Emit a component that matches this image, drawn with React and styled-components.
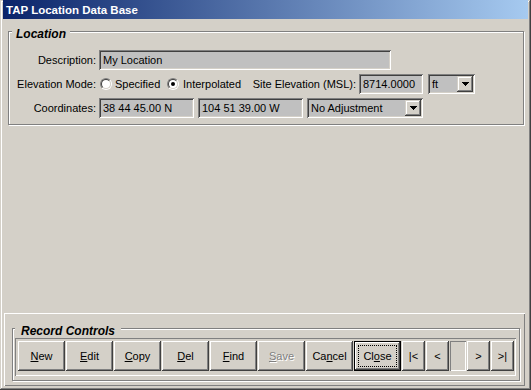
import React from 'react';
import styled, { createGlobalStyle } from 'styled-components';

const Global = createGlobalStyle`
  html, body { margin: 0; padding: 0; background: #D4D0C8; }
  body { font-family: "Liberation Sans", Arial, sans-serif; font-size: 11px; color: #000; }
`;

const Window = styled.div`
  width: 531px;
  height: 390px;
  box-sizing: border-box;
  background: #D4D0C8;
  display: flex;
  flex-direction: column;
  padding: 0 3px 4px 3px;
  box-shadow: inset -1px -1px #404040, inset 1px 1px #D4D0C8, inset -2px -2px #808080, inset 2px 2px #fff;
`;

const TitleBar = styled.div`
  height: 19px;
  flex: none;
  display: flex;
  align-items: center;
  padding-left: 3px;
  background: linear-gradient(to right, #0A246A, #A6CAF0);
  color: #fff;
  font-weight: bold;
  font-size: 11.5px;
`;

const Group = styled.div`
  position: relative;
  box-sizing: border-box;
  border: 1px solid #808080;
  box-shadow: 1px 1px 0 #fff, inset 1px 1px 0 #fff;
`;

const LocationGroup = styled(Group)`
  margin: 12px 4px 0 5px;
  padding: 18px 0 6px 0;
`;

const Legend = styled.span`
  position: absolute;
  top: -5px;
  left: ${p => p.$left}px;
  padding: 0 ${p => p.$pad}px;
  background: #D4D0C8;
  font-weight: bold;
  font-style: italic;
  font-size: 12px;
  line-height: 14px;
`;

const FormGrid = styled.div`
  display: grid;
  grid-template-columns: 87px 1fr;
  column-gap: 3px;
  row-gap: 4px;
  align-items: center;
`;

const Label = styled.div`
  text-align: right;
  white-space: nowrap;
  width: ${p => (p.$w ? `${p.$w}px` : 'auto')};
  flex: none;
`;

const Row = styled.div`
  display: flex;
  align-items: center;
  height: 20px;
  gap: ${p => p.$gap || 0}px;
`;

const Field = styled.div`
  box-sizing: border-box;
  width: ${p => p.$w}px;
  height: 20px;
  flex: none;
  margin-left: ${p => p.$ml || 0}px;
  background: #C0C0C0;
  padding: 0 4px;
  line-height: 20px;
  white-space: nowrap;
  overflow: hidden;
  box-shadow: inset 1px 1px #808080, inset -1px -1px #fff, inset 2px 2px #404040, inset -2px -2px #D4D0C8;
`;

const Combo = styled(Field)`
  display: flex;
  align-items: center;
  padding: 2px 2px 2px 4px;
  line-height: 16px;
`;

const ComboText = styled.span`
  flex: 1;
`;

const ArrowButton = styled.span`
  width: 16px;
  height: 16px;
  flex: none;
  display: flex;
  align-items: center;
  justify-content: center;
  background: #D4D0C8;
  box-shadow: inset -1px -1px #404040, inset 1px 1px #D4D0C8, inset -2px -2px #808080, inset 2px 2px #fff;
`;

const RadioOption = styled.label`
  display: flex;
  align-items: center;
  gap: ${p => p.$gap}px;
  width: ${p => p.$w}px;
  margin-left: ${p => p.$ml || 0}px;
  flex: none;
  white-space: nowrap;
`;

const RadioOuter = styled.span`
  width: 12px;
  height: 12px;
  box-sizing: border-box;
  border-radius: 50%;
  border: 1px solid;
  border-color: #808080 #fff #fff #808080;
  display: inline-flex;
  align-items: center;
  justify-content: center;
  flex: none;
`;

const RadioInner = styled.span`
  width: 10px;
  height: 10px;
  box-sizing: border-box;
  border-radius: 50%;
  border: 1px solid;
  border-color: #404040 #D4D0C8 #D4D0C8 #404040;
  background: #fff;
  display: flex;
  align-items: center;
  justify-content: center;
  &::after {
    content: '';
    width: 4px;
    height: 4px;
    border-radius: 50%;
    background: ${p => (p.$checked ? '#000' : 'transparent')};
  }
`;

const Spacer = styled.div`
  flex: 1;
`;

const BottomPanel = styled.div`
  flex: none;
  height: 73px;
  box-sizing: border-box;
  margin: 0 3px 0 1px;
  padding: 15px 0 0 8px;
  box-shadow: inset 1px 1px #fff, inset -1px -1px #808080;
`;

const RecordGroup = styled(Group)`
  width: 508px;
  height: 53px;
  padding: 9px 0 0 2px;
`;

const ButtonStrip = styled.div`
  width: 501px;
  height: 38px;
  box-sizing: border-box;
  padding: 3px;
  display: flex;
  gap: 1px;
  box-shadow: inset 1px 1px #808080, inset -1px -1px #fff;
`;

const Button = styled.div`
  position: relative;
  width: ${p => p.$w || 47}px;
  height: 30px;
  flex: none;
  box-sizing: border-box;
  display: flex;
  align-items: center;
  justify-content: center;
  background: #D4D0C8;
  white-space: nowrap;
  color: ${p => (p.$disabled ? '#808080' : '#000')};
  text-shadow: ${p => (p.$disabled ? '1px 1px 0 #fff' : 'none')};
  box-shadow: ${p =>
    p.$default
      ? 'inset 0 0 0 1px #000, inset -2px -2px #404040, inset 2px 2px #fff, inset -3px -3px #808080'
      : 'inset -1px -1px #404040, inset 1px 1px #fff, inset -2px -2px #808080'};
  ${p =>
    p.$default &&
    `&::after {
      content: '';
      position: absolute;
      inset: 4px;
      border: 1px dotted #000;
    }`}
`;

const Blank = styled.div`
  width: 16px;
  height: 30px;
  flex: none;
  box-sizing: border-box;
  box-shadow: inset 1px 1px #808080, inset -1px -1px #fff;
`;

const DownArrow = () => (
  <svg width="7" height="4" viewBox="0 0 7 4" shapeRendering="crispEdges">
    <rect x="0" y="0" width="7" height="1" fill="#000" />
    <rect x="1" y="1" width="5" height="1" fill="#000" />
    <rect x="2" y="2" width="3" height="1" fill="#000" />
    <rect x="3" y="3" width="1" height="1" fill="#000" />
  </svg>
);

const Radio = ({ checked }) => (
  <RadioOuter>
    <RadioInner $checked={checked} />
  </RadioOuter>
);

export default function App() {
  return (
    <>
      <Global />
      <Window>
        <TitleBar>TAP Location Data Base</TitleBar>
        <LocationGroup>
          <Legend $left={3} $pad={4}>Location</Legend>
          <FormGrid>
            <Label>Description:</Label>
            <Row>
              <Field $w={292}>My Location</Field>
            </Row>
            <Label>Elevation Mode:</Label>
            <Row>
              <RadioOption $w={67} $gap={3} $ml={1}>
                <Radio />
                Specified
              </RadioOption>
              <RadioOption $w={85} $gap={4}>
                <Radio checked />
                Interpolated
              </RadioOption>
              <Label $w={104}>Site Elevation (MSL):</Label>
              <Field $w={64} $ml={3}>8714.0000</Field>
              <Combo $w={47} $ml={5}>
                <ComboText>ft</ComboText>
                <ArrowButton><DownArrow /></ArrowButton>
              </Combo>
            </Row>
            <Label>Coordinates:</Label>
            <Row $gap={4}>
              <Field $w={95}>38 44 45.00 N</Field>
              <Field $w={105}>104 51 39.00 W</Field>
              <Combo $w={116}>
                <ComboText>No Adjustment</ComboText>
                <ArrowButton><DownArrow /></ArrowButton>
              </Combo>
            </Row>
          </FormGrid>
        </LocationGroup>
        <Spacer />
        <BottomPanel>
          <RecordGroup>
            <Legend $left={2} $pad={6}>Record Controls</Legend>
            <ButtonStrip>
              <Button><u>N</u>ew</Button>
              <Button><u>E</u>dit</Button>
              <Button><u>C</u>opy</Button>
              <Button><u>D</u>el</Button>
              <Button><u>F</u>ind</Button>
              <Button $disabled><u>S</u>ave</Button>
              <Button>Ca<u>n</u>cel</Button>
              <Button $default>Cl<u>o</u>se</Button>
              <Button $w={23}>|&lt;</Button>
              <Button $w={23}>&lt;</Button>
              <Blank />
              <Button $w={23}>&gt;</Button>
              <Button $w={23}>&gt;|</Button>
            </ButtonStrip>
          </RecordGroup>
        </BottomPanel>
      </Window>
    </>
  );
}
